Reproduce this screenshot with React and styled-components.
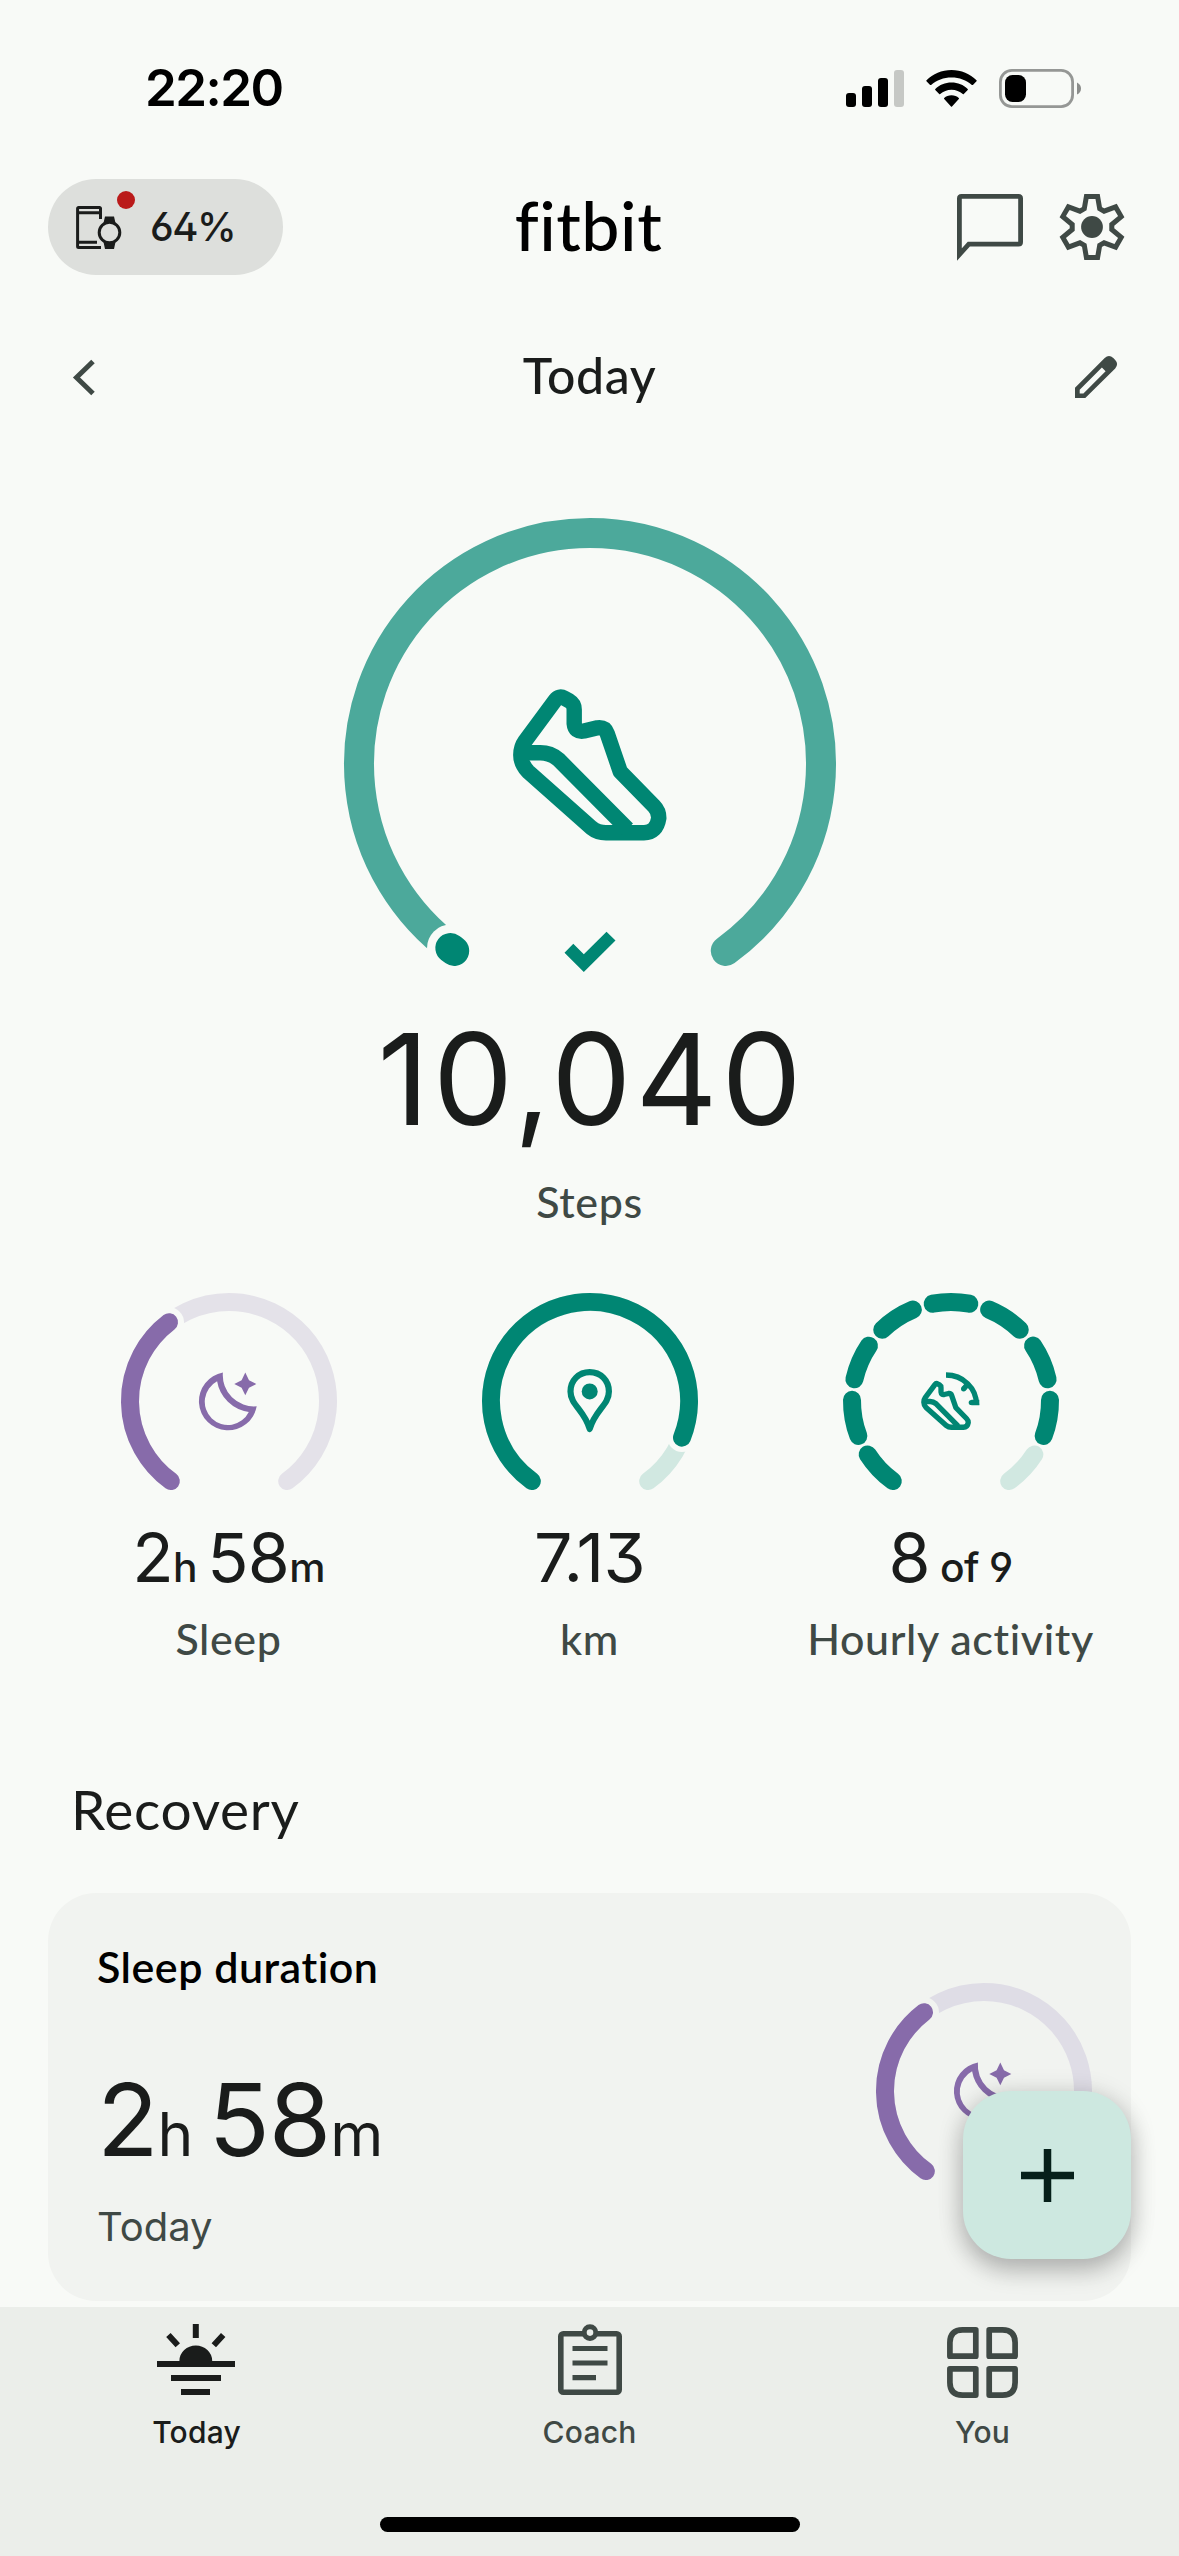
import React from "react";
import styled, { createGlobalStyle } from "styled-components";

const colors = {
  page: "#f8faf7",
  card: "#f1f3f0",
  nav: "#ebeeea",
  ink: "#1a1c1b",
  muted: "#3f4945",
  teal: "#008673",
  tealSoft: "#4ca99b",
  tealTrack: "#d1e8e1",
  purple: "#876baa",
  purpleTrack: "#e4e2e9",
  purpleTrackCard: "#dfdde6"
};

const GlobalStyle = createGlobalStyle`
  * {
    box-sizing: border-box;
  }
  body {
    margin: 0;
    background: ${colors.page};
    color: ${colors.ink};
    font-family: Lato, "Open Sans", sans-serif;
    font-variant-ligatures: none;
  }
  svg {
    display: block;
    flex: none;
    overflow: visible;
  }
`;

const Page = styled.div`
  width: 1179px;
  height: 2556px;
  display: flex;
  flex-direction: column;
  overflow: hidden;

  > * {
    flex-shrink: 0;
  }
`;

const StatusBar = styled.div`
  height: 176px;
  padding: 0 98px 0 145px;
  display: flex;
  align-items: center;
  justify-content: space-between;
`;

const Clock = styled.span`
  font-family: Inter, sans-serif;
  font-size: 51px;
  font-weight: 600;
  line-height: 60px;
  letter-spacing: -1.5px;
  color: #000;
`;

const StatusIcons = styled.div`
  display: flex;
  align-items: center;
  gap: 22px;
`;

const Header = styled.header`
  height: 96px;
  margin-top: 3px;
  padding: 0 50px 0 48px;
  display: grid;
  grid-template-columns: 1fr auto 1fr;
  align-items: center;
`;

const DevicePill = styled.button`
  width: 235px;
  height: 96px;
  padding: 0 0 0 28px;
  border: 0;
  border-radius: 48px;
  background: #dddfdc;
  color: ${colors.ink};
  display: flex;
  align-items: center;
  gap: 28px;
`;

const DeviceIcon = styled.div`
  position: relative;
`;

const AlertDot = styled.span`
  position: absolute;
  top: -15px;
  right: -13px;
  width: 18px;
  height: 18px;
  border-radius: 50%;
  background: #ba1a1a;
`;

const Battery = styled.span`
  font-family: Inter, sans-serif;
  font-size: 40px;
  font-weight: 500;
  line-height: 50px;
  letter-spacing: -1.5px;
  font-feature-settings: "ss01", "cv03", "cv04";
`;

const Logo = styled.h1`
  margin: 0;
  padding-bottom: 4px;
  font-size: 68px;
  font-weight: 500;
  line-height: 80px;
  letter-spacing: 0.5px;
  color: #000;
`;

const HeaderActions = styled.div`
  padding-right: 4px;
  display: flex;
  justify-content: flex-end;
  align-items: center;
  gap: 36px;
`;

const DateRow = styled.div`
  height: 100px;
  margin-top: 52px;
  padding: 0 62px;
  display: grid;
  grid-template-columns: 1fr auto 1fr;
  align-items: center;

  svg:first-child {
    margin-left: 11px;
  }
  svg:last-child {
    justify-self: end;
  }
`;

const DateTitle = styled.h2`
  margin: 0;
  padding-bottom: 4px;
  font-size: 50px;
  font-weight: 500;
  line-height: 60px;
  letter-spacing: 0.6px;
`;

const Hero = styled.section`
  margin-top: 91px;
  display: flex;
  flex-direction: column;
  align-items: center;
`;

const HeroValue = styled.div`
  margin-top: 36px;
  padding-left: 4px;
  font-family: Inter, sans-serif;
  font-size: 127px;
  font-weight: 400;
  line-height: 140px;
  letter-spacing: 4px;
`;

const Label = styled.div`
  margin-top: ${props => props.$gap}px;
  font-size: 43px;
  font-weight: 500;
  line-height: 50px;
  letter-spacing: 0.6px;
  color: ${colors.muted};
`;

const StatGrid = styled.section`
  margin-top: 66px;
  padding: 0 48px;
  display: grid;
  grid-template-columns: repeat(3, 361px);
`;

const Stat = styled.div`
  display: flex;
  flex-direction: column;
  align-items: center;
`;

const Value = styled.div`
  margin-top: ${props => props.$gap}px;
  font-family: Inter, sans-serif;
  font-size: ${props => props.$size}px;
  font-weight: 400;
  line-height: ${props => props.$line}px;
  letter-spacing: -0.01em;
  font-feature-settings: "ss01", "cv03", "cv04";
  white-space: pre;
`;

const Unit = styled.span`
  font-size: 0.6em;
  font-weight: ${props => props.$weight || 500};
  line-height: 0;
`;

const SectionTitle = styled.h2`
  margin: 113px 0 0 71px;
  font-size: 55px;
  font-weight: 400;
  line-height: 64px;
  letter-spacing: 0.7px;
`;

const Card = styled.section`
  height: 408px;
  margin: 52px 48px 6px;
  padding: 0 39px 0 49px;
  border-radius: 48px;
  background: ${colors.card};
  display: flex;
  justify-content: space-between;
  align-items: flex-start;
  position: relative;

  > svg {
    margin-top: 90px;
  }
`;

const CardText = styled.div`
  padding-top: 49px;
`;

const CardTitle = styled.h3`
  margin: 0;
  font-size: 43px;
  font-weight: 600;
  line-height: 50px;
  letter-spacing: 0.5px;
  color: #000;
`;

const CardNote = styled.div`
  margin-top: 23px;
  font-family: Inter, sans-serif;
  font-size: 40px;
  line-height: 50px;
  color: ${colors.muted};
`;

const AddButton = styled.button`
  position: absolute;
  right: 0;
  bottom: 42px;
  width: 168px;
  height: 168px;
  border: 0;
  border-radius: 48px;
  background: #cde8e0;
  display: flex;
  align-items: center;
  justify-content: center;
  box-shadow: 0 12px 24px rgba(0, 0, 0, 0.2), 0 3px 24px 3px rgba(0, 0, 0, 0.12);
`;

const TabBar = styled.nav`
  height: 249px;
  padding-top: 17px;
  background: ${colors.nav};
  display: grid;
  grid-template-columns: repeat(3, 1fr);
  grid-template-rows: 193px 15px;
  justify-items: center;
  position: relative;
`;

const Tab = styled.a`
  display: flex;
  flex-direction: column;
  align-items: center;
  color: ${props => (props.$active ? colors.ink : colors.muted)};
  font-family: Inter, sans-serif;
  font-size: 30px;
  font-weight: 500;
  line-height: 40px;
  letter-spacing: 0.2px;
`;

const TabIcon = styled.div`
  height: 88px;
  padding-top: ${props => props.$top || 0}px;
`;

const HomeBar = styled.div`
  grid-column: 1 / -1;
  width: 420px;
  height: 15px;
  border-radius: 8px;
  background: #000;
`;

// angles are clockwise degrees from the top of the ring
const point = (size, r, deg) => {
  const a = (deg * Math.PI) / 180;
  return [size / 2 + r * Math.sin(a), size / 2 - r * Math.cos(a)];
};

const arc = (size, r, from, to) => {
  const [x1, y1] = point(size, r, from);
  const [x2, y2] = point(size, r, to);
  return `M${x1} ${y1}A${r} ${r} 0 ${to - from > 180 ? 1 : 0} 1 ${x2} ${y2}`;
};

const Ring = ({ value, gap, color, track, bg, children }) => {
  const [cx, cy] = point(216, 99, value);
  return (
    <svg width="216" height="200" fill="none" strokeWidth="18">
      <path d={arc(216, 99, -144, 144)} stroke={track} strokeLinecap="round" />
      <circle cx={cx} cy={cy} r={gap} fill={bg} />
      <path
        d={arc(216, 99, -144, value)}
        stroke={color}
        strokeLinecap="round"
      />
      {children}
    </svg>
  );
};

const SegmentRing = ({ done, children }) => (
  <svg width="216" height="200" fill="none">
    {Array.from({ length: 9 }, (_, i) => {
      const from = -144 + i * 33.333;
      return (
        <path
          key={i}
          d={arc(216, 99, from, from + 21.333)}
          stroke={i < done ? colors.teal : colors.tealTrack}
          strokeWidth="18"
          strokeLinecap="round"
        />
      );
    })}
    {children}
  </svg>
);

const Shoe = ({ transform, width }) => (
  <g
    transform={transform}
    stroke={colors.teal}
    strokeWidth={width}
    strokeLinejoin="round"
    fill="none"
  >
    <path d="M12.3 51.7L42.2 11.2Q46 6.2 51.5 9.2L56.5 12Q61.2 14.8 61.2 20.5V34.5Q62 43.5 71 42L84.5 38.8Q92 38 94.2 44.5L107.3 82.7L141 117.2Q145.8 122 145.8 129Q143.5 143.7 131 143.7H93Q84.5 143.7 78.4 138.7L14.7 82.2Q7.8 74.5 7.8 66Q7.8 58 12.3 51.7Z" />
    <path d="M10 63.7H27.4Q37.5 63.7 45.3 70.3L114.5 140" />
  </g>
);

const Moon = () => (
  <g transform="translate(78 79.3)" fill={colors.purple}>
    <path
      fillRule="evenodd"
      d="M23.9 .3A31.2 31.2 0 0 0 57.7 34A29.1 29.1 0 1 1 23.9 .3ZM18.1 9A23.2 23.2 0 1 0 49.8 39.7A37.2 37.2 0 0 1 18.1 9Z"
    />
    <path d="M46.3 .3L50 8L57.3 11.7L50 15.4L46.3 23L42.6 15.4L35.3 11.7L42.6 8Z" />
  </g>
);

const Gear = () => {
  const pts = [0, 1, 2, 3, 4, 5].flatMap(i => {
    const a = (i * Math.PI) / 3;
    return [[-7.7, -18.4], [-5.6, -30.5], [5.6, -30.5], [7.7, -18.4]].map(
      ([x, y]) => [
        x * Math.cos(a) - y * Math.sin(a),
        x * Math.sin(a) + y * Math.cos(a)
      ]
    );
  });
  return (
    <svg width="66" height="66" viewBox="-33 -33 66 66">
      <polygon
        points={pts.join(" ")}
        fill="none"
        stroke={colors.muted}
        strokeWidth="5"
      />
      <circle r="10.9" fill={colors.muted} />
    </svg>
  );
};

const App = () => {
  return (
    <>
      <GlobalStyle />
      <Page>
        <StatusBar>
          <Clock>22:20</Clock>
          <StatusIcons>
            <svg width="58" height="37">
              <rect y="23" width="10" height="14" rx="3" />
              <rect x="16" y="16" width="10" height="21" rx="3" />
              <rect x="32" y="8" width="10" height="29" rx="3" />
              <rect x="48" width="10" height="37" rx="3" fill="#c6c8c5" />
            </svg>
            <svg width="51" height="37">
              <path d="M25.5 0C35.3 0 44 3.9 50.5 10.2Q51 10.7 50.5 11.2L46.9 14.9Q46.4 15.3 45.9 14.9C40.3 10 33.4 7.4 25.5 7.4S10.7 10 5.1 14.9Q4.6 15.3 4.1 14.9L.5 11.2Q0 10.7 .5 10.2C7 3.9 15.7 0 25.5 0Z" />
              <path d="M25.5 12.6C31.9 12.6 37.4 15 41.7 19Q42.2 19.5 41.7 20L37.8 24Q37.3 24.5 36.8 24C33.7 21.4 29.9 19.8 25.5 19.8S17.3 21.4 14.2 24Q13.7 24.5 13.2 24L9.3 20Q8.8 19.5 9.3 19C13.6 15 19.1 12.6 25.5 12.6Z" />
              <path d="M25.5 25.2C28.4 25.2 30.9 26.2 32.8 27.9Q33.3 28.5 32.8 29L26 36.5Q25.5 37 25 36.5L18.2 29Q17.7 28.5 18.2 27.9C20.1 26.2 22.6 25.2 25.5 25.2Z" />
            </svg>
            <svg width="82" height="39">
              <rect
                x="1.4"
                y="1.4"
                width="72.2"
                height="36.2"
                rx="11.5"
                fill="none"
                stroke="#959795"
                strokeWidth="2.8"
              />
              <rect x="6" y="6" width="21" height="27" rx="7.5" />
              <path d="M78 13.5Q82 15.5 82 19.5T78 25.5Z" fill="#8b8d8b" />
            </svg>
          </StatusIcons>
        </StatusBar>

        <Header>
          <DevicePill>
            <DeviceIcon>
              <svg
                width="46"
                height="43"
                fill="none"
                stroke={colors.ink}
                strokeWidth="3"
              >
                <path d="M24.5 13V2.5Q24.5 1.6 23.5 1.6H2.6Q1.6 1.6 1.6 2.5V40.5Q1.6 41.5 2.6 41.5H25" />
                <path d="M1.6 6.7H24.5M1.6 36.3H21" />
                <circle cx="33.5" cy="26.5" r="10.3" />
                <path
                  d="M29 10.5H38L39.5 17H27.5ZM27.5 36H39.5L38 43H29Z"
                  fill={colors.ink}
                  stroke="none"
                />
              </svg>
              <AlertDot />
            </DeviceIcon>
            <Battery>64%</Battery>
          </DevicePill>
          <Logo>fitbit</Logo>
          <HeaderActions>
            <svg width="66" height="66" fill="none" stroke={colors.muted}>
              <path
                d="M2.4 60.5V4.5Q2.4 2.4 4.5 2.4H61.5Q63.6 2.4 63.6 4.5V48Q63.6 50.2 61.5 50.2H11.8Z"
                strokeWidth="4.8"
              />
            </svg>
            <Gear />
          </HeaderActions>
        </Header>

        <DateRow>
          <svg width="22" height="35" fill="none">
            <path
              d="M20 1.5L3.5 17.5L20 33.5"
              stroke={colors.muted}
              strokeWidth="5"
            />
          </svg>
          <DateTitle>Today</DateTitle>
          <svg width="42" height="42" fill={colors.muted}>
            <path
              fillRule="evenodd"
              d="M0 31.7L29.7 2Q34 -2 38.3 2L40.2 4Q44 8 40.2 12.4L10.3 42H0ZM4.7 33.7V37.4H8.4L30.6 15.2L26.9 11.5Z"
            />
          </svg>
        </DateRow>

        <Hero>
          <svg width="492" height="455" fill="none">
            <path
              d={arc(492, 231, -144, 144)}
              stroke={colors.tealSoft}
              strokeWidth="30"
              strokeLinecap="round"
            />
            <circle cx="110.2" cy="433" r="22" fill={colors.page} />
            <circle cx="106.5" cy="430" r="23.5" fill={colors.page} />
            <path
              d={arc(492, 231, -144, -142.8)}
              stroke={colors.teal}
              strokeWidth="30"
              strokeLinecap="round"
            />
            <Shoe transform="translate(169 171)" width={15.4} />
            <path
              d="M220.5 434.7L229.3 425.7L239.8 436.3L262.5 413.7L271.5 422.5L239.8 454Z"
              fill={colors.teal}
            />
          </svg>
          <HeroValue>10,040</HeroValue>
          <Label $gap={28}>Steps</Label>
        </Hero>

        <StatGrid>
          <Stat>
            <Ring
              value={-37.3}
              gap={15}
              color={colors.purple}
              track={colors.purpleTrack}
              bg={colors.page}
            >
              <Moon />
            </Ring>
            <Value $gap={24} $size={68} $line={80}>
              2<Unit>h </Unit>58<Unit>m</Unit>
            </Value>
            <Label $gap={17}>Sleep</Label>
          </Stat>
          <Stat>
            <Ring
              value={111.7}
              gap={14.5}
              color={colors.teal}
              track={colors.tealTrack}
              bg={colors.page}
            >
              <g transform="translate(85.3 76)">
                <path
                  d="M22.4 3.1C11.5 3.1 3.2 11.5 3.2 22.5C3.2 36 17 41 22.4 60C27.8 41 41.6 36 41.6 22.5C41.6 11.5 33.3 3.1 22.4 3.1Z"
                  stroke={colors.teal}
                  strokeWidth="6.2"
                  strokeLinejoin="round"
                />
                <circle cx="22.4" cy="22.4" r="8" fill={colors.teal} />
              </g>
            </Ring>
            <Value $gap={24} $size={68} $line={80}>
              7.13
            </Value>
            <Label $gap={17}>km</Label>
          </Stat>
          <Stat>
            <SegmentRing done={8}>
              <g transform="translate(78.3 79.3)">
                <Shoe
                  transform="translate(0 8.7) scale(.322)"
                  width={16.5}
                />
                <g stroke={colors.teal} strokeWidth="5.3">
                  <path d="M24.7 2.7C41.5 2.7 55.3 15.5 55.3 32.7" />
                  <path d="M58 30.2H50M47.5 10.5L42.5 16.5" />
                </g>
                <circle cx="50" cy="30.2" r="2.6" fill={colors.teal} />
                <circle cx="42.3" cy="16.5" r="2.6" fill={colors.teal} />
              </g>
            </SegmentRing>
            <Value $gap={24} $size={68} $line={80}>
              8<Unit> of 9</Unit>
            </Value>
            <Label $gap={17}>Hourly activity</Label>
          </Stat>
        </StatGrid>

        <SectionTitle>Recovery</SectionTitle>
        <Card>
          <CardText>
            <CardTitle>Sleep duration</CardTitle>
            <Value $gap={67} $size={101} $line={120}>
              2<Unit $weight={400}>h </Unit>58<Unit $weight={400}>m</Unit>
            </Value>
            <CardNote>Today</CardNote>
          </CardText>
          <Ring
            value={-37.3}
            gap={15}
            color={colors.purple}
            track={colors.purpleTrackCard}
            bg={colors.card}
          >
            <Moon />
          </Ring>
          <AddButton>
            <svg width="53" height="53">
              <path
                d="M26.5 0V53M0 26.5H53"
                stroke="#06201a"
                strokeWidth="7.5"
              />
            </svg>
          </AddButton>
        </Card>

        <TabBar>
          <Tab $active>
            <TabIcon>
              <svg width="78" height="71" fill={colors.ink}>
                <path d="M0 37H22.4A16.4 15.4 0 0 1 55.2 37H78V43H0ZM14 51H64V57H14ZM24 65H53V71H24Z" />
                <path
                  d="M38.8 0V14M11.4 11L20.8 21.2M66.2 11L56.8 21.2"
                  stroke={colors.ink}
                  strokeWidth="6"
                />
              </svg>
            </TabIcon>
            Today
          </Tab>
          <Tab>
            <TabIcon>
              <svg width="64" height="71" fill="none" stroke={colors.muted}>
                <rect
                  x="2.8"
                  y="9.8"
                  width="58.4"
                  height="58.4"
                  rx="2.5"
                  strokeWidth="5.6"
                />
                <circle
                  cx="32"
                  cy="8.6"
                  r="5.8"
                  fill={colors.nav}
                  strokeWidth="5"
                />
                <path
                  d="M14.5 24.5H49.5M14.5 39H49.5M14.5 53.7H38"
                  strokeWidth="5.2"
                />
              </svg>
            </TabIcon>
            Coach
          </Tab>
          <Tab>
            <TabIcon $top={3}>
              <svg
                width="71"
                height="71"
                fill="none"
                stroke={colors.muted}
                strokeWidth="5.7"
                strokeLinejoin="round"
              >
                <path d="M28.8 2.9V29.2H2.9V15.5Q2.9 2.9 15.5 2.9Z" />
                <path d="M42.2 2.9V29.2H68.1V15.5Q68.1 2.9 55.5 2.9Z" />
                <path d="M28.8 68.1V41.8H2.9V55.5Q2.9 68.1 15.5 68.1Z" />
                <path d="M42.2 68.1V41.8H68.1V55.5Q68.1 68.1 55.5 68.1Z" />
              </svg>
            </TabIcon>
            You
          </Tab>
          <HomeBar />
        </TabBar>
      </Page>
    </>
  );
};

export default App;
